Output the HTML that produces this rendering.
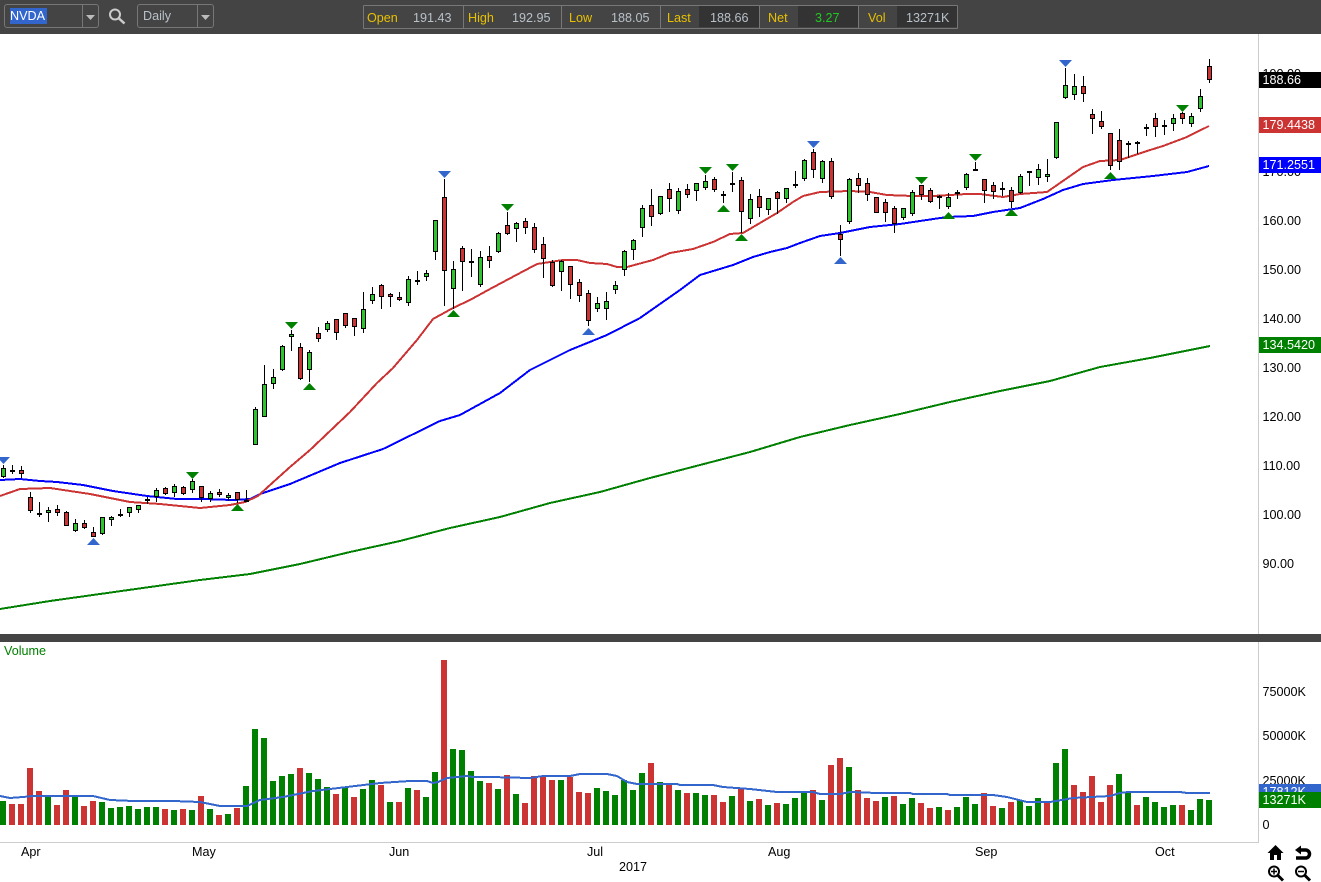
<!DOCTYPE html>
<html><head><meta charset="utf-8"><title>NVDA</title>
<style>
html,body{margin:0;padding:0;background:#fff}
body{width:1321px;height:882px;position:relative;overflow:hidden;font-family:"Liberation Sans",Arial,sans-serif;font-size:12.6px;color:#000}
.a{position:absolute;line-height:16px;height:16px;white-space:nowrap;margin-top:1px}
.h{position:absolute;left:0;top:0;width:1321px;height:34px;background:#444}
.bx{position:absolute;border:1px solid #777;box-sizing:border-box;border-radius:3px}
.y{color:#e8c000}.v{color:#b8c0c8}
.d{position:absolute;top:6px;height:21px;background:#333}
.s{position:absolute;top:5px;width:1px;height:23px;background:#777}
.l{left:1262.5px}
.t{position:absolute;left:1259px;width:62px;color:#fff;overflow:hidden;height:16px;line-height:17px;padding-left:3.5px;box-sizing:border-box}
svg{position:absolute;left:0;top:0}
</style></head><body>
<svg width="1321" height="882" viewBox="0 0 1321 882" fill="none">
<rect x="1258" y="34" width="1" height="809" fill="#ccc"/>
<rect x="0" y="842" width="1258" height="1" fill="#ccc"/>
<rect x="0" y="634" width="1321" height="8" fill="#444"/>
<g shape-rendering="crispEdges" stroke-width="2" stroke-linejoin="round">
<polyline stroke="#008000" points="0,609 50,601 100,594 150,587 200,580 250,574 300,564 350,552 400,541 450,528 500,517 550,503 600,492 650,478 700,465 750,452 800,437 850,425 900,414 950,402 1000,391 1050,381 1100,367 1150,358 1210,346"/>
<polyline stroke="#0000ff" points="0,480 20,479 40,481 57,482 83,485 113,491 147,496 177,499 203,499 233,500 250,499 260,494 290,484 340,463 383,449 440,421 460,415 500,393 530,370 570,350 607,335 640,318 680,290 700,275 733,265 753,257 770,252 787,248 800,243 820,236 840,233 870,227 900,224 920,221 947,217 973,216 993,212 1020,208 1043,199 1063,190 1083,184 1113,180 1153,176 1187,172 1209,166"/>
<polyline stroke="#cc3333" points="0,496 20,489 50,488 90,494 130,502 160,504 200,508 230,505 245,502 258,496 270,485 290,467 310,450 350,412 377,383 393,368 417,340 433,319 453,308 470,300 490,289 520,273 537,264 563,260 577,260 590,263 607,264 617,267 627,267 653,260 670,253 693,249 713,242 730,234 743,233 760,223 777,213 793,202 803,196 820,192 850,191 870,192 887,195 913,196 933,196 967,194 980,194 1003,197 1020,194 1047,192 1060,183 1083,167 1100,161 1120,160 1147,151 1163,146 1187,137 1209,126"/>
</g>
<g shape-rendering="crispEdges">
<path stroke="#000" stroke-width="1" d="M3.5 465V478M12.5 465V474M21.5 466V478M30.5 492V513M39.5 502V517M48.5 507V522M57.5 505V516M66.5 511V526M75.5 519V532M84.5 520V529M93.5 527V537M102.5 517V535M111.5 516V526M120.5 509V517M129.5 507V517M138.5 505V513M147.5 497V504M156.5 488V502M165.5 487V495M174.5 484V497M183.5 486V495M192.5 479V493M201.5 486V502M210.5 491V502M219.5 489V497M228.5 493V501M237.5 492V503M246.5 490V502M255.5 407V445M264.5 365V417M273.5 369V389M282.5 345V371M291.5 330V351M300.5 343V380M309.5 350V382M318.5 327V342M327.5 321V332M336.5 319V340M345.5 313V328M354.5 318V336M363.5 292V333M372.5 287V304M381.5 284V309M390.5 293V307M399.5 292V301M408.5 276V306M417.5 271V285M426.5 270V281M435.5 220V260M444.5 179V306M453.5 261V309M462.5 246V291M471.5 249V277M480.5 251V287M489.5 246V268M498.5 232V253M507.5 212V235M516.5 222V242M525.5 218V234M534.5 223V253M543.5 237V278M552.5 260V287M561.5 260V291M570.5 266V299M579.5 279V302M588.5 290V326M597.5 297V312M606.5 292V320M615.5 281V294M624.5 250V276M633.5 239V260M642.5 205V237M651.5 189V226M660.5 196V215M669.5 183V212M678.5 188V214M687.5 184V198M696.5 183V201M705.5 175V190M714.5 177V192M723.5 191V203M732.5 172V192M741.5 177V233M750.5 194V224M759.5 189V217M768.5 198V215M777.5 191V214M786.5 188V203M795.5 171V188M804.5 159V181M813.5 149V178M822.5 160V183M831.5 158V199M840.5 225V256M849.5 178V224M858.5 173V193M867.5 178V201M876.5 197V213M885.5 199V222M894.5 206V233M903.5 208V220M912.5 190V216M921.5 185V200M930.5 188V203M939.5 195V209M948.5 193V209M957.5 190V199M966.5 173V190M975.5 162V171M984.5 179V203M993.5 182V199M1002.5 182V196M1011.5 187V208M1020.5 174V194M1029.5 171V186M1038.5 164V185M1047.5 159V182M1056.5 122V159M1065.5 68V99M1074.5 74V100M1083.5 76V102M1092.5 109V134M1101.5 111V129M1110.5 133V170M1119.5 129V170M1128.5 141V158M1137.5 141V154M1146.5 124V136M1155.5 113V137M1164.5 120V135M1173.5 114V131M1182.5 112V124M1191.5 113V127M1200.5 89V112M1209.5 59V83"/>
<path stroke="#000" stroke-width="2" d="M10 471h5M37 514h5M118 515h5M145 500h5M244 501h5M469 262h5M721 195h5M793 185h5M955 193h5M1000 189h5M1126 144h5M1135 143h5M1144 128h5M1162 126h5"/>
<path stroke="#000" fill="#2ec42e" d="M1.5 468.5h4v8h-4zM46.5 510.5h4v2h-4zM73.5 523.5h4v7h-4zM100.5 517.5h4v16h-4zM109.5 517.5h4v2h-4zM127.5 507.5h4v5h-4zM136.5 505.5h4v4h-4zM154.5 490.5h4v6h-4zM172.5 486.5h4v6h-4zM190.5 481.5h4v8h-4zM208.5 493.5h4v5h-4zM226.5 495.5h4v2h-4zM253.5 409.5h4v35h-4zM262.5 384.5h4v32h-4zM271.5 377.5h4v6h-4zM280.5 346.5h4v23h-4zM289.5 334.5h4v2h-4zM307.5 352.5h4v17h-4zM325.5 323.5h4v6h-4zM361.5 309.5h4v19h-4zM370.5 294.5h4v6h-4zM406.5 279.5h4v23h-4zM424.5 273.5h4v3h-4zM433.5 220.5h4v31h-4zM451.5 269.5h4v19h-4zM478.5 257.5h4v27h-4zM496.5 233.5h4v18h-4zM514.5 223.5h4v5h-4zM559.5 261.5h4v10h-4zM595.5 303.5h4v5h-4zM604.5 301.5h4v7h-4zM613.5 285.5h4v4h-4zM622.5 251.5h4v18h-4zM631.5 240.5h4v9h-4zM640.5 208.5h4v19h-4zM658.5 196.5h4v17h-4zM676.5 191.5h4v19h-4zM694.5 183.5h4v7h-4zM703.5 181.5h4v6h-4zM748.5 199.5h4v19h-4zM766.5 198.5h4v11h-4zM784.5 188.5h4v10h-4zM802.5 160.5h4v18h-4zM820.5 161.5h4v17h-4zM847.5 179.5h4v42h-4zM901.5 208.5h4v9h-4zM910.5 192.5h4v21h-4zM937.5 196.5h4v1h-4zM946.5 197.5h4v9h-4zM964.5 174.5h4v13h-4zM973.5 169.5h4v1h-4zM1018.5 176.5h4v16h-4zM1036.5 169.5h4v8h-4zM1045.5 174.5h4v2h-4zM1054.5 122.5h4v35h-4zM1063.5 85.5h4v12h-4zM1072.5 86.5h4v8h-4zM1171.5 118.5h4v5h-4zM1189.5 116.5h4v7h-4zM1198.5 96.5h4v12h-4z"/>
<path stroke="#000" fill="#cc3333" d="M19.5 470.5h4v3h-4zM28.5 497.5h4v13h-4zM55.5 509.5h4v3h-4zM64.5 512.5h4v13h-4zM82.5 523.5h4v4h-4zM91.5 532.5h4v4h-4zM163.5 488.5h4v5h-4zM181.5 487.5h4v6h-4zM199.5 486.5h4v11h-4zM217.5 492.5h4v2h-4zM235.5 492.5h4v7h-4zM298.5 347.5h4v31h-4zM316.5 333.5h4v5h-4zM334.5 319.5h4v13h-4zM343.5 313.5h4v12h-4zM352.5 318.5h4v8h-4zM379.5 285.5h4v11h-4zM388.5 294.5h4v2h-4zM397.5 297.5h4v2h-4zM415.5 280.5h4v1h-4zM442.5 197.5h4v73h-4zM460.5 248.5h4v13h-4zM487.5 256.5h4v4h-4zM505.5 225.5h4v8h-4zM523.5 221.5h4v6h-4zM532.5 227.5h4v22h-4zM541.5 244.5h4v14h-4zM550.5 262.5h4v23h-4zM568.5 266.5h4v18h-4zM577.5 282.5h4v13h-4zM586.5 293.5h4v27h-4zM649.5 205.5h4v11h-4zM667.5 189.5h4v9h-4zM685.5 189.5h4v5h-4zM712.5 179.5h4v10h-4zM730.5 183.5h4v1h-4zM739.5 180.5h4v31h-4zM757.5 196.5h4v11h-4zM775.5 192.5h4v6h-4zM811.5 152.5h4v17h-4zM829.5 161.5h4v35h-4zM838.5 234.5h4v5h-4zM856.5 178.5h4v7h-4zM865.5 183.5h4v11h-4zM874.5 197.5h4v15h-4zM883.5 202.5h4v10h-4zM892.5 208.5h4v15h-4zM919.5 185.5h4v9h-4zM928.5 190.5h4v11h-4zM982.5 179.5h4v11h-4zM991.5 185.5h4v6h-4zM1009.5 190.5h4v11h-4zM1027.5 171.5h4v1h-4zM1081.5 86.5h4v7h-4zM1090.5 114.5h4v4h-4zM1099.5 121.5h4v5h-4zM1108.5 133.5h4v32h-4zM1117.5 140.5h4v21h-4zM1153.5 118.5h4v8h-4zM1180.5 113.5h4v5h-4zM1207.5 66.5h4v13h-4z"/>
</g>
<path fill="#3366cc" d="M-3 457h13l-6.500 7zM438 171h13l-6.500 7zM807 141h13l-6.500 7zM1059 60h13l-6.500 7zM87 545h13l-6.500-7zM582 335h13l-6.500-7zM834 264h13l-6.500-7z"/>
<path fill="#008000" d="M186 472h13l-6.500 7zM285 322h13l-6.500 7zM501 204h13l-6.500 7zM699 167h13l-6.500 7zM726 164h13l-6.500 7zM915 177h13l-6.500 7zM969 154h13l-6.500 7zM1176 105h13l-6.500 7zM231 511h13l-6.500-7zM303 390h13l-6.500-7zM447 317h13l-6.500-7zM717 212h13l-6.500-7zM735 241h13l-6.500-7zM942 219h13l-6.500-7zM1005 216h13l-6.500-7zM1104 179h13l-6.500-7z"/>
<g shape-rendering="crispEdges">
<path fill="#008000" d="M0 801h6V825h-6zM45 797h6V825h-6zM72 797h6V825h-6zM99 802h6V825h-6zM108 808h6V825h-6zM117 807h6V825h-6zM126 806h6V825h-6zM135 809h6V825h-6zM144 807h6V825h-6zM153 807h6V825h-6zM171 810h6V825h-6zM189 810h6V825h-6zM207 809h6V825h-6zM225 814h6V825h-6zM243 786h6V825h-6zM252 729h6V825h-6zM261 738h6V825h-6zM270 781h6V825h-6zM279 776h6V825h-6zM288 774h6V825h-6zM306 773h6V825h-6zM315 779h6V825h-6zM324 787h6V825h-6zM342 788h6V825h-6zM360 789h6V825h-6zM369 780h6V825h-6zM387 802h6V825h-6zM405 788h6V825h-6zM423 797h6V825h-6zM432 772h6V825h-6zM450 749h6V825h-6zM459 750h6V825h-6zM468 771h6V825h-6zM477 781h6V825h-6zM495 789h6V825h-6zM513 794h6V825h-6zM558 780h6V825h-6zM594 788h6V825h-6zM603 791h6V825h-6zM612 795h6V825h-6zM621 780h6V825h-6zM630 790h6V825h-6zM639 773h6V825h-6zM657 782h6V825h-6zM675 790h6V825h-6zM693 793h6V825h-6zM702 795h6V825h-6zM729 796h6V825h-6zM747 801h6V825h-6zM765 805h6V825h-6zM783 804h6V825h-6zM792 798h6V825h-6zM801 792h6V825h-6zM819 800h6V825h-6zM846 767h6V825h-6zM882 797h6V825h-6zM900 804h6V825h-6zM909 798h6V825h-6zM936 807h6V825h-6zM954 807h6V825h-6zM963 797h6V825h-6zM972 804h6V825h-6zM999 808h6V825h-6zM1017 800h6V825h-6zM1026 806h6V825h-6zM1035 798h6V825h-6zM1053 763h6V825h-6zM1062 749h6V825h-6zM1116 774h6V825h-6zM1125 793h6V825h-6zM1143 797h6V825h-6zM1152 802h6V825h-6zM1161 807h6V825h-6zM1170 805h6V825h-6zM1188 810h6V825h-6zM1197 799h6V825h-6zM1206 800h6V825h-6z"/>
<path fill="#cc3333" d="M9 804h6V825h-6zM18 804h6V825h-6zM27 768h6V825h-6zM36 791h6V825h-6zM54 805h6V825h-6zM63 790h6V825h-6zM81 806h6V825h-6zM90 801h6V825h-6zM162 809h6V825h-6zM180 809h6V825h-6zM198 796h6V825h-6zM216 815h6V825h-6zM234 808h6V825h-6zM297 768h6V825h-6zM333 794h6V825h-6zM351 797h6V825h-6zM378 785h6V825h-6zM396 802h6V825h-6zM414 790h6V825h-6zM441 660h6V825h-6zM486 783h6V825h-6zM504 775h6V825h-6zM522 803h6V825h-6zM531 776h6V825h-6zM540 777h6V825h-6zM549 780h6V825h-6zM567 777h6V825h-6zM576 792h6V825h-6zM585 793h6V825h-6zM648 763h6V825h-6zM666 784h6V825h-6zM684 793h6V825h-6zM711 795h6V825h-6zM720 802h6V825h-6zM738 789h6V825h-6zM756 799h6V825h-6zM774 803h6V825h-6zM810 790h6V825h-6zM828 765h6V825h-6zM837 758h6V825h-6zM855 790h6V825h-6zM864 798h6V825h-6zM873 801h6V825h-6zM891 796h6V825h-6zM918 803h6V825h-6zM927 808h6V825h-6zM945 810h6V825h-6zM981 793h6V825h-6zM990 806h6V825h-6zM1008 802h6V825h-6zM1044 802h6V825h-6zM1071 785h6V825h-6zM1080 792h6V825h-6zM1089 776h6V825h-6zM1098 802h6V825h-6zM1107 785h6V825h-6zM1134 805h6V825h-6zM1179 805h6V825h-6z"/>
<polyline stroke="#3366cc" stroke-width="2" points="0,796 10,798 23,797 33,796 93,796 110,800 133,801 173,801 200,802 220,806 247,806 260,800 283,797 313,791 347,787 380,783 410,781 427,781 433,783 438,782 447,778 467,776 473,777 490,777 530,778 543,776 570,776 580,774 607,774 617,776 627,782 637,784 677,784 680,785 713,785 723,787 750,789 777,792 813,792 820,794 840,794 850,792 877,793 910,793 913,794 947,794 950,795 993,795 1007,797 1027,802 1050,802 1073,798 1110,796 1120,793 1128,792 1180,792 1187,793 1210,793"/>
</g>
</svg>

<div class="h"></div>
<div class="bx" style="left:4px;top:4px;width:95px;height:24px"></div>
<div class="a" style="left:10px;top:8px;margin-top:0;width:37px;background:#3366cc;color:#fff">NVDA</div>
<div class="s" style="left:82px;top:4px;height:24px"></div>
<div class="bx" style="left:137px;top:4px;width:77px;height:24px"></div>
<div class="a v" style="left:143px;top:8px;margin-top:0">Daily</div>
<div class="s" style="left:197px;top:4px;height:24px"></div>
<svg width="1321" height="34" viewBox="0 0 1321 34" fill="none">
<path fill="#bbb" d="M86 15h9l-4.500 5zM201 15h9l-4.500 5z"/>
<circle cx="115" cy="14.500" r="5" stroke="#ccc" stroke-width="2"/>
<path stroke="#ccc" stroke-width="2.500" d="M119 18.500l5.500 5"/>
</svg>

<div class="bx" style="left:363px;top:5px;width:595px;height:24px;border-radius:1px"></div>
<div class="d" style="left:699px;width:60px"></div>
<div class="d" style="left:798px;width:60px"></div>
<div class="d" style="left:897px;width:60px"></div>
<div class="s" style="left:463px"></div><div class="s" style="left:561px"></div><div class="s" style="left:660px"></div><div class="s" style="left:759px"></div><div class="s" style="left:858px"></div>
<div class="a y" style="left:367px;top:9px">Open</div><div class="a v" style="left:413px;top:9px">191.43</div>
<div class="a y" style="left:468px;top:9px">High</div><div class="a v" style="left:512px;top:9px">192.95</div>
<div class="a y" style="left:569px;top:9px">Low</div><div class="a v" style="left:611px;top:9px">188.05</div>
<div class="a y" style="left:667px;top:9px">Last</div><div class="a v" style="left:710px;top:9px">188.66</div>
<div class="a y" style="left:768px;top:9px">Net</div><div class="a" style="left:815px;top:9px;color:#22c822">3.27</div>
<div class="a y" style="left:868px;top:9px">Vol</div><div class="a v" style="left:906px;top:9px">13271K</div>

<div class="a l" style="top:65px">190.00</div>
<div class="a l" style="top:163px">170.00</div>
<div class="a l" style="top:212px">160.00</div>
<div class="a l" style="top:261px">150.00</div>
<div class="a l" style="top:310px">140.00</div>
<div class="a l" style="top:359px">130.00</div>
<div class="a l" style="top:408px">120.00</div>
<div class="a l" style="top:457px">110.00</div>
<div class="a l" style="top:506px">100.00</div>
<div class="a l" style="top:555px">90.00</div>
<div class="t" style="top:72px;background:#000">188.66</div>
<div class="t" style="top:117px;background:#cc3333">179.4438</div>
<div class="t" style="top:157px;background:#0000ff">171.2551</div>
<div class="t" style="top:337px;background:#008000">134.5420</div>

<div class="a" style="left:4px;top:642px;color:#008000">Volume</div>
<div class="a l" style="top:683px">75000K</div>
<div class="a l" style="top:727px">50000K</div>
<div class="a l" style="top:772px">25000K</div>
<div class="a l" style="top:816px">0</div>
<div class="t" style="top:784px;height:8px;background:#3366cc">17812K</div>
<div class="t" style="top:792px;background:#008000">13271K</div>

<div class="a" style="left:21px;top:843px">Apr</div>
<div class="a" style="left:192px;top:843px">May</div>
<div class="a" style="left:389px;top:843px">Jun</div>
<div class="a" style="left:587px;top:843px">Jul</div>
<div class="a" style="left:768px;top:843px">Aug</div>
<div class="a" style="left:975px;top:843px">Sep</div>
<div class="a" style="left:1155px;top:843px">Oct</div>
<div class="a" style="left:619px;top:858px">2017</div>

<svg width="1321" height="882" viewBox="0 0 1321 882" fill="none">
<path fill="#000" d="M1275.500 845l8 8h-2.500v7h-4v-5h-3v5H1270v-7h-2.500z"/>
<path stroke="#000" stroke-width="3.500" d="M1299 850h6.500a4 4 0 0 1 0 8H1296"/>
<path fill="#000" d="M1301 845.500v9l-6-4.500z"/>
<circle cx="1274" cy="871.500" r="5" stroke="#000" stroke-width="2"/>
<path stroke="#000" stroke-width="1.500" d="M1271 871.500h6M1274 868.500v6"/>
<path stroke="#000" stroke-width="3" d="M1278 875.500l5 5"/>
<circle cx="1301" cy="871.500" r="5" stroke="#000" stroke-width="2"/>
<path stroke="#000" stroke-width="1.500" d="M1298 871.500h6"/>
<path stroke="#000" stroke-width="3" d="M1305 875.500l5 5"/>
</svg>
</body></html>
